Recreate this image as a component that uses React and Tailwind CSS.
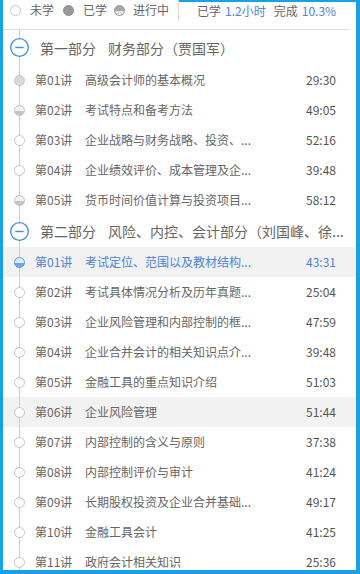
import React from "react";

const sections = [
  {
    title: "第一部分",
    name: "财务部分（贾国军）",
    lessons: [
      { no: "第01讲", title: "高级会计师的基本概况", time: "29:30", state: "done" },
      { no: "第02讲", title: "考试特点和备考方法", time: "49:05", state: "half" },
      { no: "第03讲", title: "企业战略与财务战略、投资、...", time: "52:16", state: "empty" },
      { no: "第04讲", title: "企业绩效评价、成本管理及企...", time: "39:48", state: "empty" },
      { no: "第05讲", title: "货币时间价值计算与投资项目...", time: "58:12", state: "half" },
    ],
  },
  {
    title: "第二部分",
    name: "风险、内控、会计部分（刘国峰、徐...",
    lessons: [
      { no: "第01讲", title: "考试定位、范围以及教材结构...", time: "43:31", state: "active" },
      { no: "第02讲", title: "考试具体情况分析及历年真题...", time: "25:04", state: "empty" },
      { no: "第03讲", title: "企业风险管理和内部控制的框...", time: "47:59", state: "empty" },
      { no: "第04讲", title: "企业合并会计的相关知识点介...", time: "39:48", state: "empty" },
      { no: "第05讲", title: "金融工具的重点知识介绍", time: "51:03", state: "empty" },
      { no: "第06讲", title: "企业风险管理", time: "51:44", state: "empty", hover: true },
      { no: "第07讲", title: "内部控制的含义与原则", time: "37:38", state: "empty" },
      { no: "第08讲", title: "内部控制评价与审计", time: "41:24", state: "empty" },
      { no: "第09讲", title: "长期股权投资及企业合并基础...", time: "49:17", state: "empty" },
      { no: "第10讲", title: "金融工具会计", time: "41:25", state: "empty" },
      { no: "第11讲", title: "政府会计相关知识", time: "25:36", state: "empty" },
    ],
  },
];

const Marker = ({ state }) => {
  if (state === "done")
    return (
      <svg width="11" height="11" viewBox="0 0 11 11">
        <circle cx="5.5" cy="5.5" r="5" fill="#d9d9d9" stroke="#c6c6c6" />
      </svg>
    );
  if (state === "legendDone")
    return (
      <svg width="11" height="11" viewBox="0 0 11 11">
        <circle cx="5.5" cy="5.5" r="5" fill="#999" stroke="#8f8f8f" />
      </svg>
    );
  if (state === "half" || state === "legendHalf" || state === "active") {
    const c =
      state === "active"
        ? ["#e2edfb", "#6ea5ea", "#5b9be6"]
        : state === "legendHalf"
        ? ["#a8a8a8", "#e6e6e6", "#9a9a9a"]
        : ["#f2f2f2", "#c4c4c4", "#c2c2c2"];
    return (
      <svg width="11" height="11" viewBox="0 0 11 11">
        <defs>
          <clipPath id={"cb" + state}>
            <rect x="0" y="6" width="11" height="5" />
          </clipPath>
        </defs>
        <circle cx="5.5" cy="5.5" r="5" fill={c[0]} />
        <circle cx="5.5" cy="5.5" r="5" fill={c[1]} clipPath={`url(#cb${state})`} />
        <circle cx="5.5" cy="5.5" r="5" fill="none" stroke={c[2]} />
      </svg>
    );
  }
  return (
    <svg width="11" height="11" viewBox="0 0 11 11">
      <circle cx="5.5" cy="5.5" r="5" fill="#fff" stroke="#c4c4c4" />
    </svg>
  );
};

const Rail = ({ children }) => (
  <div className="relative w-[32px] h-full flex items-center shrink-0">
    <div className="absolute left-[16px] top-0 bottom-0 w-px bg-[#cfcfcf]" />
    {children}
  </div>
);

const Lesson = ({ l }) => {
  const active = l.state === "active";
  return (
    <div
      className={`flex items-center h-[30px] text-[12px] leading-[16px] ${
        active || l.hover ? "bg-[#f2f2f2]" : ""
      }`}
    >
      <Rail>
        <div className="relative ml-[11px] flex">
          <Marker state={l.state} />
        </div>
      </Rail>
      <span className={`w-[50px] shrink-0 ${active ? "text-[#4a84dd]" : "text-[#666]"}`}>
        {l.no}
      </span>
      <span
        className={`flex-1 whitespace-nowrap ${
          active ? "text-[#4a84dd]" : "text-[#666]"
        }`}
      >
        {l.title}
      </span>
      <span className={`pr-[20px] ${active ? "text-[#4a84dd]" : "text-[#555]"}`}>
        {l.time}
      </span>
    </div>
  );
};

export default function App() {
  return (
    <div className="w-[360px] h-[574px] bg-white border-l-[3px] border-r-[4px] border-b-[4px] border-[#17a2e8] overflow-hidden font-['Noto_Sans_CJK_SC','Microsoft_YaHei',sans-serif]">
      <div className="flex h-[29px] text-[12px] leading-[16px] text-[#666]">
        <div className="flex items-center h-[20px] pl-[7px]">
          <Marker state="empty" />
          <span className="ml-[9px]">未学</span>
          <span className="ml-[9px] flex">
            <Marker state="legendDone" />
          </span>
          <span className="ml-[9px]">已学</span>
          <span className="ml-[7px] flex">
            <Marker state="legendHalf" />
          </span>
          <span className="ml-[8px]">进行中</span>
        </div>
        <div className="ml-[9px] w-px h-[22px] bg-[#dcdcdc]" />
        <div className="flex-1 border-t-2 border-[#17a2e8] flex items-start">
          <div className="flex items-center h-[17px] pl-[18px]">
            <span>已学</span>
            <span className="ml-[4px] text-[#4a84dd]">1.2小时</span>
            <span className="ml-[8px]">完成</span>
            <span className="ml-[4px] text-[#4a84dd]">10.3%</span>
          </div>
        </div>
      </div>
      <div className="h-px bg-[#dedede] mr-[6px]" />

      {sections.map((s, i) => (
        <div key={i}>
          <div
            className={`flex items-center ${
              i === 0 ? "h-[35px]" : "h-[32px]"
            } text-[14px] leading-[18px] text-[#666]`}
          >
            <Rail>
              <svg className="relative ml-[7px]" width="19" height="19" viewBox="0 0 19 19">
                <circle cx="9.5" cy="9.5" r="8.8" fill="#fff" stroke="#3d8fe0" strokeWidth="1.3" />
                <line x1="5.3" y1="9.5" x2="13.7" y2="9.5" stroke="#3d8fe0" strokeWidth="1.4" />
              </svg>
            </Rail>
            <span className="ml-[5px]">{s.title}</span>
            <span className="ml-[12px] whitespace-nowrap">{s.name}</span>
          </div>
          {s.lessons.map((l, j) => (
            <Lesson key={j} l={l} />
          ))}
        </div>
      ))}
    </div>
  );
}
